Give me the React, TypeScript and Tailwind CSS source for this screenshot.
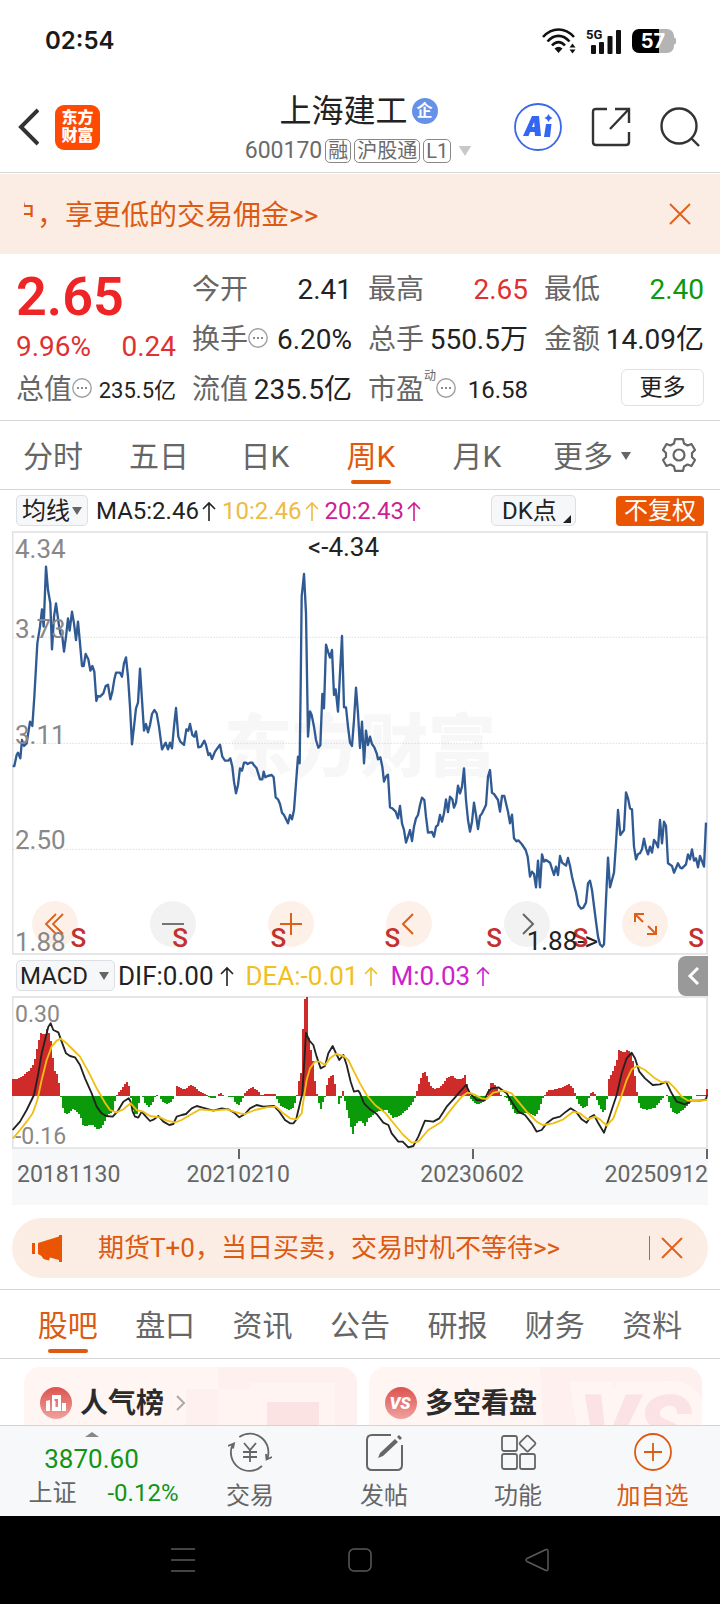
import React from 'react';

// Chart coordinates are in thirds of a pixel, one week is 6 units wide.
const WEEK = 6;
const MACD_ZERO = 438;

const PRICE_POINTS = `38,738 43,738 50,705 54,698 61,715 66,660 72,678 80,670 90,605 97,618 103,530 112,370 120,320 126,268 131,320
138,140 144,210 151,250 156,388 162,290 168,250 176,310 181,340 187,350 192,395 198,350 204,295 209,332 216,275 222,310 228,360
234,305 240,370 246,438 251,438 257,402 265,418 271,452 277,438 283,455 289,543 294,528 300,530 310,520 317,498 324,494 331,538
337,515 343,478 348,458 360,458 366,470 372,430 378,412 384,470 390,560 396,673 402,620 408,565 414,548 420,446 426,540 432,632
438,612 444,637 450,615 456,582 463,570 470,580 477,620 486,688 497,668 504,688 510,668 516,685 522,620 528,564 535,650 541,665
552,675 559,628 565,632 570,612 577,645 583,650 588,634 595,682 603,680 613,662 618,675 625,705 630,700 636,717 645,695 660,674
667,710 675,722 685,722 691,715 697,740 702,785 708,820 714,795 720,745 726,752 732,728 738,728 743,732 750,728 757,728 762,736
770,745 780,778 787,778 791,755 796,772 803,768 815,765 821,772 827,832 834,838 840,852 846,878 852,885 864,910 870,885 876,898
882,870 888,790 894,710 899,730 902,500 905,230 912,162 918,280 924,650 930,574 935,585 942,620 948,660 955,683 961,676 967,522
972,565 978,374 984,395 990,413 996,390 1002,525 1007,508 1014,575 1020,460 1026,348 1032,562 1038,562 1044,620 1050,668 1056,678
1062,600 1068,503 1074,580 1080,684 1086,605 1092,730 1098,632 1104,675 1110,650 1116,672 1123,682 1130,700 1134,718 1141,712
1147,740 1152,785 1158,770 1164,764 1170,862 1177,865 1187,875 1194,895 1200,858 1206,910 1212,930 1218,968 1224,950 1230,930
1236,963 1242,920 1248,895 1254,885 1260,855 1266,833 1273,840 1278,890 1284,938 1296,936 1302,950 1308,920 1314,915 1320,885
1326,905 1332,880 1338,838 1344,876 1350,830 1357,838 1362,863 1368,848 1374,797 1380,820 1386,800 1392,745 1398,840 1404,900
1410,935 1416,905 1422,848 1428,885 1434,927 1440,888 1446,880 1458,855 1464,770 1470,750 1476,818 1482,822 1494,840 1500,875
1506,828 1513,828 1518,850 1524,875 1530,910 1536,884 1542,955 1549,964 1555,961 1565,972 1577,990 1583,1010 1590,1070 1596,1055
1602,1062 1608,1102 1614,1022 1620,1102 1626,1003 1632,1025 1638,1020 1650,1028 1662,1065 1668,1040 1674,1065 1680,1008 1686,1028
1698,1037 1704,1014 1710,1038 1716,1070 1722,1095 1728,1118 1735,1155 1743,1166 1750,1163 1758,1148 1764,1090 1770,1082 1776,1110
1782,1158 1788,1205 1794,1250 1800,1273 1807,1280 1812,1273 1818,1140 1824,1013 1830,1102 1836,1080 1842,1058 1848,970 1854,870
1861,945 1872,930 1878,817 1884,835 1890,865 1896,868 1902,980 1908,1018 1914,1002 1920,1000 1926,988 1932,956 1938,985 1944,1003
1950,980 1956,998 1962,960 1968,968 1974,982 1980,900 1986,970 1992,905 1998,918 2004,1030 2016,1038 2022,1058 2034,1030 2040,1042
2046,1045 2058,1033 2064,1003 2070,1018 2076,988 2082,1022 2088,1015 2094,1042 2100,1008 2112,1040 2118,908`;

const DIF_POINTS = `38,540 60,515 80,480 102,435 115,370 125,310 135,270 145,230 152,220 160,240 175,247 185,275 198,310 210,318 225,322
240,345 255,385 275,430 290,470 305,490 318,498 338,500 352,485 370,455 386,445 392,455 398,485 405,500 415,503 425,485 438,500
450,513 462,508 475,498 490,515 508,525 520,522 530,500 545,495 558,492 575,475 590,468 605,472 640,482 665,475 685,478 705,490
718,502 735,492 750,475 770,465 790,470 822,468 838,485 855,510 870,520 880,520 888,510 900,460 907,430 912,350 918,248 928,272
940,285 950,320 962,355 975,348 985,310 998,288 1008,310 1018,330 1030,315 1040,345 1052,395 1062,425 1075,422 1080,430 1092,460
1110,478 1130,492 1150,518 1165,525 1175,550 1195,575 1208,575 1225,592 1240,588 1255,560 1275,512 1300,515 1318,505 1340,470
1360,448 1380,425 1398,405 1410,430 1430,450 1452,452 1465,425 1475,415 1495,412 1520,430 1535,455 1555,485 1575,495 1595,520
1610,545 1625,540 1640,520 1660,505 1680,500 1698,485 1712,475 1728,485 1745,508 1760,518 1770,502 1782,495 1795,520 1812,548
1822,520 1835,480 1850,435 1865,370 1880,325 1895,308 1905,325 1918,365 1935,385 1958,405 1980,403 1998,395 2015,430 2030,455
2055,463 2075,452 2100,452 2118,448 2121,436`;

const DEA_POINTS = `38,566 60,540 80,515 98,490 112,450 125,390 140,330 155,290 170,272 182,266 200,280 220,300 240,320 265,365 290,415
315,458 330,480 348,487 370,478 392,460 410,480 430,485 450,498 480,502 500,512 525,517 545,510 570,495 600,478 640,482 680,478
720,490 735,492 765,480 800,472 828,470 850,490 870,505 890,508 905,490 912,440 920,390 930,355 945,335 960,335 975,345 990,325
1008,312 1030,318 1045,330 1062,365 1080,400 1100,435 1125,465 1155,488 1185,525 1210,555 1235,578 1255,575 1285,540 1325,515
1360,470 1385,440 1402,428 1420,432 1445,445 1460,447 1480,428 1510,422 1535,430 1555,455 1580,485 1610,515 1628,525 1660,520
1690,508 1720,485 1740,490 1762,508 1785,500 1800,508 1820,527 1840,505 1860,450 1880,390 1895,358 1912,348 1935,360 1965,385
1985,397 2005,395 2025,415 2045,440 2065,452 2080,453 2121,450`;

// [x, signed bar height] anchors, bars between them are interpolated
const HISTOGRAM: [number, number][] = [
  [36, 50], [50, 50], [70, 62], [90, 78], [102, 98], [108, 125], [114, 158], [120, 178], [126, 198], [132, 175], [140, 202],
  [146, 192], [154, 160], [160, 105], [166, 68], [174, 65], [178, 30], [181, 0], [186, -5], [190, -45], [198, -55], [208, -50],
  [220, -38], [230, -48], [240, -55], [248, -85], [258, -92], [270, -85], [280, -88], [292, -100], [304, -95], [315, -75],
  [325, -55], [340, -45], [346, -10], [350, 0], [358, 12], [370, 28], [380, 44], [388, 28], [392, 0], [396, -30], [402, -55],
  [412, -55], [418, -15], [422, 0], [428, 0], [432, -18], [446, -33], [458, -22], [464, -5], [470, 3], [480, -2], [486, -18],
  [500, -24], [515, -18], [522, -4], [526, 0], [530, 32], [545, 22], [560, 22], [572, 35], [590, 22], [600, 12], [620, 4],
  [630, -5], [642, -8], [655, 3], [663, 10], [672, 0], [700, -3], [706, -20], [716, -28], [726, -15], [732, 5], [745, 20],
  [760, 26], [775, 15], [782, 4], [825, 6], [832, -12], [845, -32], [865, -42], [880, -35], [888, -12], [893, 15], [900, 65],
  [906, 75], [909, 200], [914, 290], [921, 296], [924, 200], [930, 150], [938, 115], [943, 60], [950, 10], [954, -10],
  [962, -42], [970, -16], [976, 0], [982, 40], [990, 60], [1000, 62], [1006, 30], [1011, 0], [1018, -28], [1024, 0], [1029, 14],
  [1034, -10], [1042, -45], [1050, -80], [1058, -118], [1066, -85], [1080, -72], [1090, -82], [1096, -90], [1104, -70],
  [1120, -55], [1140, -45], [1160, -42], [1180, -66], [1200, -58], [1220, -42], [1235, -25], [1245, -5], [1250, 10], [1260, 45],
  [1270, 70], [1276, 74], [1284, 50], [1292, 32], [1302, 20], [1320, 25], [1340, 52], [1355, 62], [1370, 52], [1385, 50],
  [1396, 65], [1402, 30], [1408, 5], [1412, -8], [1425, -22], [1438, -25], [1455, -15], [1464, 3], [1470, 40], [1480, 38],
  [1495, 20], [1502, 2], [1520, -4], [1535, -30], [1545, -52], [1560, -55], [1580, -50], [1595, -55], [1608, -60], [1620, -35],
  [1630, -3], [1636, 3], [1645, 18], [1670, 20], [1690, 28], [1708, 35], [1720, 22], [1728, 0], [1735, -22], [1750, -36],
  [1762, -28], [1770, 5], [1778, 14], [1786, 5], [1794, -22], [1808, -50], [1817, -40], [1822, 0], [1826, 50], [1836, 70],
  [1850, 100], [1856, 140], [1870, 130], [1882, 138], [1892, 130], [1900, 100], [1908, 35], [1914, -10], [1920, -35],
  [1940, -42], [1965, -35], [1985, -10], [1995, 0], [2000, 5], [2006, -15], [2016, -45], [2030, -54], [2050, -42], [2070, -20],
  [2076, 0], [2090, 2], [2114, 2], [2118, 10], [2124, 30],
];

function getBars() {
  const bars: { x: number; value: number }[] = [];
  let anchor = 0;

  for (let x = 36; x < 2121; x += WEEK) {
    const center = x + WEEK / 2;
    while (anchor < HISTOGRAM.length - 2 && HISTOGRAM[anchor + 1][0] < center) {
      anchor += 1;
    }
    const [x0, v0] = HISTOGRAM[anchor];
    const [x1, v1] = HISTOGRAM[anchor + 1];
    bars.push({ x, value: Math.round(v0 + ((v1 - v0) * (center - x0)) / (x1 - x0)) });
  }

  return bars;
}

const BARS = getBars();

const SELL_MARKS = [235, 540, 835, 1177, 1482, 1741, 2088];

const PERIOD_TABS = ['分时', '五日', '日K', '周K', '月K'];
const INFO_TABS = ['股吧', '盘口', '资讯', '公告', '研报', '财务', '资料'];

function CloseIcon() {
  return (
    <svg viewBox="0 0 24 24" className="h-6 w-6" fill="none" stroke="#e2621b" strokeWidth="2">
      <path d="M2 2 22 22M22 2 2 22" />
    </svg>
  );
}

function InfoIcon() {
  return (
    <svg viewBox="0 0 20 20" className="mb-1 h-5 w-5 shrink-0" fill="none" stroke="#a0a0a0" strokeWidth="1.4">
      <circle cx="10" cy="10" r="9.2" />
      <path d="M5 10h2M9 10h2M13 10h2" stroke="#8a8a8a" strokeWidth="2" />
    </svg>
  );
}

function UpArrow() {
  return (
    <svg viewBox="0 0 14 20" className="h-5 w-3.5 shrink-0" fill="none" stroke="currentColor" strokeWidth="1.6">
      <path d="M7 20V2M1 8 7 2l6 6" />
    </svg>
  );
}

function Caret({ className }: { className: string }) {
  return (
    <svg viewBox="0 0 10 8" className={className} fill="currentColor">
      <path d="M0 0h10L5 8z" />
    </svg>
  );
}

function StatusBar() {
  return (
    <div className="flex h-[82px] shrink-0 items-center justify-between pl-[45px] pr-11 text-[#1a1a1a]">
      <span className="text-2xl font-semibold font-[Inter,sans-serif]">02:54</span>
      <div className="flex items-center gap-2.5">
        <svg viewBox="0 0 34 26" className="h-[26px] w-[34px]" fill="none" stroke="#111" strokeWidth="2.6">
          <path d="M1 9C10-1 23-1 32 9" />
          <path d="M5.500 13.500C12 6 21 6 27.500 13.500" />
          <path d="M10 17.500C14 13 19 13 23 17.500" />
          <path d="M12.500 20.500Q16.500 17 20.500 20.500L16.500 25z" fill="#111" stroke="none" />
          <path d="M30.500 15.500l3 4h-6zM30.500 25.500l3-4h-6z" fill="#111" stroke="none" />
        </svg>
        <svg viewBox="0 0 36 26" className="h-[26px] w-9" fill="#111">
          <text x="0" y="10.500" fontSize="13" fontWeight="700" fontFamily="Roboto, sans-serif">5G</text>
          <rect x="5" y="17" width="5" height="9" rx="1" />
          <rect x="13" y="14" width="5" height="12" rx="1" />
          <rect x="21.500" y="8" width="5" height="18" rx="1" />
          <rect x="30" y="2" width="5" height="24" rx="1" />
        </svg>
        <svg viewBox="0 0 44 24" className="h-6 w-11">
          <path d="M27 0h8a7 7 0 0 1 7 7v1.500q2 0 2 2v3q0 2-2 2V17a7 7 0 0 1-7 7h-8z" fill="#b4b4b4" />
          <path d="M7 0h20v24H7a7 7 0 0 1-7-7V7a7 7 0 0 1 7-7z" fill="#000" />
          <text x="21" y="19" fontSize="20" fontWeight="700" fill="#fff" textAnchor="middle" fontFamily="Inter, sans-serif">57</text>
        </svg>
      </div>
    </div>
  );
}

function Header() {
  return (
    <header className="grid h-[91px] shrink-0 grid-cols-[1fr_auto_1fr] items-center border-b border-[#d4d7da] pl-[17px] pr-5">
      <div className="flex items-center gap-4">
        <button aria-label="返回">
          <svg viewBox="0 0 22 38" className="h-[38px] w-[22px]" fill="none" stroke="#333" strokeWidth="4">
            <path d="M21 2 4 19l17 17" />
          </svg>
        </button>
        <a href="#home" className="grid h-[45px] w-[45px] place-content-center rounded-[9px] bg-[#fe4a02] text-center text-base font-black leading-[18px] text-white">
          <span>东方</span>
          <span>财富</span>
        </a>
      </div>

      <div className="flex flex-col items-center gap-1 pt-1">
        <div className="flex items-center gap-1">
          <h1 className="text-[32px] leading-10 text-[#222]">上海建工</h1>
          <span className="grid h-[26px] w-[26px] place-content-center rounded-full bg-[#6592e8] text-base font-bold leading-none text-white">企</span>
        </div>
        <div className="flex items-center gap-[3px] text-xl leading-[22px] text-[#6b6b6b]">
          <span className="text-[23px] leading-8">600170</span>
          <span className="rounded-[5px] border border-[#888] px-0.5">融</span>
          <span className="rounded-[5px] border border-[#888] px-0.5">沪股通</span>
          <span className="rounded-[5px] border border-[#888] px-0.5">L1</span>
          <Caret className="ml-1 h-2.5 w-3.5 text-[#c8c8c8]" />
        </div>
      </div>

      <div className="flex items-center justify-end gap-[29px]">
        <button aria-label="AI">
          <svg viewBox="0 0 48 48" className="h-12 w-12" fill="#3366f5">
            <circle cx="24" cy="24" r="23" fill="none" stroke="#3a68e8" strokeWidth="1.800" />
            <path fillRule="evenodd" d="M18 13h7l2 20h-6l-.4-4h-4.500l-1.600 4H9zM18 24h2.500l-.3-5z" />
            <path d="M32 21h5.500L36 34h-6z" />
            <path d="m34.500 11 1.500 2.500 2.500 1.500-2.500 1.500-1.500 2.500-1.500-2.500-2.500-1.500 2.500-1.500z" />
          </svg>
        </button>
        <button aria-label="分享">
          <svg viewBox="0 0 40 40" className="h-10 w-10" fill="none" stroke="#333" strokeWidth="2.400">
            <path d="M16 2H5q-3 0-3 3v30q0 3 3 3h30q3 0 3-3V25M24 2h14v14M38 2 19 22" />
          </svg>
        </button>
        <button aria-label="搜索">
          <svg viewBox="0 0 40 40" className="h-10 w-10" fill="none" stroke="#333" strokeWidth="2.400">
            <circle cx="19" cy="19" r="17.500" />
            <path d="m31 31 8 8" />
          </svg>
        </button>
      </div>
    </header>
  );
}

function Banner() {
  return (
    <div className="mt-px flex h-20 shrink-0 items-center bg-[#fcede4] pl-6 pr-7 text-[28px] text-[#dd5a12]">
      <a href="#account" className="flex-1 overflow-hidden whitespace-nowrap pt-1">
        <span className="-ml-[15px]">户，享更低的交易佣金&gt;&gt;</span>
      </a>
      <button aria-label="关闭">
        <CloseIcon />
      </button>
    </div>
  );
}

interface QuoteItemProps {
  label: string;
  value: string;
  valueClass?: string;
  info?: boolean;
  sup?: string;
}

function QuoteItem({ label, value, valueClass = 'text-[28px] text-[#222]', info, sup }: QuoteItemProps) {
  return (
    <div className="flex h-[50px] items-center justify-between whitespace-nowrap">
      <span className="flex items-center text-[28px] text-[#666]">
        {label}
        {sup ? <sup className="mb-4 text-xs leading-none">{sup}</sup> : null}
        {info ? <InfoIcon /> : null}
      </span>
      <span className={valueClass}>{value}</span>
    </div>
  );
}

function Quote() {
  return (
    <section className="grid h-[167px] shrink-0 grid-cols-4 gap-x-4 border-b border-[#d4d7da] px-4 pt-[11px]">
      <div>
        <div className="flex h-[64px] items-center text-[54px] font-semibold leading-none text-[#ee2527]">2.65</div>
        <div className="flex h-9 items-center justify-between text-[28px] text-[#e03030]">
          <span>9.96%</span>
          <span>0.24</span>
        </div>
        <QuoteItem label="总值" value="235.5亿" info valueClass="text-[22px] text-[#222]" />
      </div>
      <div>
        <QuoteItem label="今开" value="2.41" />
        <QuoteItem label="换手" value="6.20%" info />
        <QuoteItem label="流值" value="235.5亿" />
      </div>
      <div>
        <QuoteItem label="最高" value="2.65" valueClass="text-[28px] text-[#e03030]" />
        <QuoteItem label="总手" value="550.5万" />
        <QuoteItem label="市盈" value="16.58" info sup="动" valueClass="text-2xl text-[#222]" />
      </div>
      <div>
        <QuoteItem label="最低" value="2.40" valueClass="text-[28px] text-[#0c990c]" />
        <QuoteItem label="金额" value="14.09亿" />
        <div className="flex h-[50px] items-center justify-end pb-1.5">
          <button className="h-[37px] w-[83px] rounded-md border border-[#dfe1e4] text-[23px] leading-none text-[#222]">更多</button>
        </div>
      </div>
    </section>
  );
}

function PeriodTabs() {
  return (
    <nav className="grid h-[69px] shrink-0 grid-cols-[106fr_106fr_106fr_106fr_106fr_124fr_66fr] border-b border-[#d4d7da] text-[30px] text-[#666]">
      {PERIOD_TABS.map((tab) => {
        const active = tab === '周K';

        return (
          <button key={tab} className={`relative pt-0.5 ${active ? 'text-[#e2580a]' : ''}`}>
            {tab}
            {active ? <span className="absolute bottom-[5px] left-1/2 h-1 w-10 -translate-x-1/2 rounded-full bg-[#e2580a]" /> : null}
          </button>
        );
      })}
      <button className="flex items-center justify-center gap-2 pt-0.5">
        更多
        <Caret className="h-2 w-2.5" />
      </button>
      <button aria-label="设置" className="grid place-content-center pr-4">
        <svg viewBox="0 0 34 34" className="h-[34px] w-[34px]" fill="none" stroke="#666" strokeWidth="2.200" strokeLinejoin="round">
          <path d="M13 1.200h8l1 4.300 3.500 2 4-1.500 3.500 6-3 3v4l3 3-3.500 6-4-1.500-3.500 2-1 4.300h-8l-1-4.300-3.500-2-4 1.500-3.500-6 3-3v-4l-3-3 3.500-6 4 1.500 3.500-2z" />
          <circle cx="17" cy="17" r="5.500" />
        </svg>
      </button>
    </nav>
  );
}

function PriceChart() {
  return (
    <div className="relative">
      <svg viewBox="36 33 2088 1272" className="block w-full">
        <text x="1080" y="752" fontSize="204" fontWeight="900" fill="#f7f7f7" textAnchor="middle" fontFamily="Noto Sans CJK SC, sans-serif">
          东方财富
        </text>
        <rect x="38" y="36" width="2083" height="1266" fill="none" stroke="#e2e2e4" strokeWidth="5" />
        {[352, 670, 988].map((y) => (
          <path key={y} d={`M38 ${y}H2121`} stroke="#ccc" strokeWidth="3" strokeDasharray="3 6" />
        ))}
        <polyline points={PRICE_POINTS} fill="none" stroke="#2f5a93" strokeWidth="7" strokeLinejoin="round" />
      </svg>

      <div className="absolute bottom-2 left-5 right-10 flex justify-between text-[#dd5f18]">
        <button aria-label="快退" className="h-[46px] w-[46px] rounded-full bg-[#fdece3]/80">
          <svg viewBox="0 0 46 46" fill="none" stroke="currentColor" strokeWidth="1.800">
            <path d="M24 13 14 23l10 10M31 13 21 23l10 10" />
          </svg>
        </button>
        <button aria-label="缩小" className="h-[46px] w-[46px] rounded-full bg-[#f1f1f1]/90">
          <svg viewBox="0 0 46 46" fill="none" stroke="#666" strokeWidth="1.800">
            <path d="M12 23h22" />
          </svg>
        </button>
        <button aria-label="放大" className="h-[46px] w-[46px] rounded-full bg-[#fdece3]/80">
          <svg viewBox="0 0 46 46" fill="none" stroke="currentColor" strokeWidth="2">
            <path d="M12 23h22M23 12v22" />
          </svg>
        </button>
        <button aria-label="左移" className="h-[46px] w-[46px] rounded-full bg-[#fdece3]/80">
          <svg viewBox="0 0 46 46" fill="none" stroke="currentColor" strokeWidth="2">
            <path d="M27 13 17 23l10 10" />
          </svg>
        </button>
        <button aria-label="右移" className="h-[46px] w-[46px] rounded-full bg-[#f1f1f1]/90">
          <svg viewBox="0 0 46 46" fill="none" stroke="#666" strokeWidth="2">
            <path d="m19 13 10 10-10 10" />
          </svg>
        </button>
        <button aria-label="全屏" className="h-[46px] w-[46px] rounded-full bg-[#fdece3]/80">
          <svg viewBox="0 0 46 46" fill="none" stroke="currentColor" strokeWidth="2">
            <path d="M13 21v-8h9M13 13l8 8M34 25v8h-9M34 33l-8-8" />
          </svg>
        </button>
      </div>

      <svg viewBox="36 33 2088 1272" className="pointer-events-none absolute inset-0 w-full" fontFamily="Roboto, sans-serif" fontSize="78">
        {SELL_MARKS.map((x) => (
          <text key={x} x={x} y="1280" fill="#c4302f" fontWeight="500" textAnchor="middle">S</text>
        ))}
        <g fill="#888">
          <text x="45" y="114">4.34</text>
          <text x="45" y="354">3.73</text>
          <text x="45" y="672">3.11</text>
          <text x="45" y="987">2.50</text>
          <text x="45" y="1294">1.88</text>
        </g>
        <g fill="#222">
          <text x="924" y="108">&lt;-4.34</text>
          <text x="1580" y="1290">1.88-&gt;</text>
        </g>
      </svg>
    </div>
  );
}

function MacdChart() {
  return (
    <svg viewBox="36 138 2088 459" className="block w-full" fontFamily="Roboto, sans-serif" fontSize="69">
      <rect x="38" y="141" width="2083" height="453" fill="none" stroke="#e2e2e4" strokeWidth="5" />
      {BARS.map(({ x, value }) => (
        <rect
          key={x}
          x={x}
          y={value > 0 ? MACD_ZERO - value : MACD_ZERO}
          width={WEEK}
          height={Math.abs(value)}
          fill={value > 0 ? '#cf2b2b' : '#0a9a0a'}
          shapeRendering="crispEdges"
        />
      ))}
      <g fill="#888">
        <text x="45" y="216">0.30</text>
        <text x="45" y="582">-0.16</text>
      </g>
      <polyline points={DIF_POINTS} fill="none" stroke="#222" strokeWidth="5.500" strokeLinejoin="round" />
      <polyline points={DEA_POINTS} fill="none" stroke="#f0c010" strokeWidth="5.500" strokeLinejoin="round" />
    </svg>
  );
}

function ChartPanel() {
  return (
    <section className="shrink-0 px-3">
      <div className="flex h-[41px] items-center px-1 text-2xl leading-none">
        <button className="flex h-[31px] items-center gap-0.5 rounded-[5px] border border-[#dcdfe3] bg-[#f6f7f9] px-[5px] text-[#222]">
          均线
          <Caret className="h-2 w-2.5 text-[#666]" />
        </button>
        <span className="ml-2 flex items-center gap-[3px] text-[#222]">MA5:2.46 <UpArrow /></span>
        <span className="ml-1.5 flex items-center gap-[3px] text-[#eebb44]">10:2.46 <UpArrow /></span>
        <span className="ml-1.5 flex items-center gap-[3px] text-[#cc1f95]">20:2.43 <UpArrow /></span>
        <button className="ml-auto flex h-[31px] w-[85px] items-center rounded-[5px] border border-[#dcdfe3] bg-[#f6f7f9] pl-2.5 text-[#222]">
          DK点
          <svg viewBox="0 0 8 8" className="ml-auto mr-1 mt-4 h-2 w-2" fill="#222">
            <path d="M8 0v8H0z" />
          </svg>
        </button>
        <button className="ml-10 h-[30px] w-[88px] rounded bg-[#ea5504] text-white">不复权</button>
      </div>

      <PriceChart />

      <div className="flex h-[41px] items-center pl-1 text-[26px] leading-none">
        <button className="flex h-[31px] w-[99px] shrink-0 items-center justify-between rounded-[5px] border border-[#dcdfe3] bg-[#f6f7f9] pl-[3px] pr-[5px] text-2xl leading-none text-[#222]">
          MACD
          <Caret className="h-2 w-2.5 text-[#666]" />
        </button>
        <span className="ml-[3px] flex items-center gap-1.5 text-[#222]">DIF:0.00 <UpArrow /></span>
        <span className="ml-3 flex items-center gap-1.5 text-[#f0c020]">DEA:-0.01 <UpArrow /></span>
        <span className="ml-3 flex items-center gap-1.5 text-[#cc22cc]">M:0.03 <UpArrow /></span>
        <button aria-label="展开" className="ml-auto grid h-10 w-[30px] place-content-center rounded-l-lg bg-[#999]">
          <svg viewBox="0 0 12 20" className="h-5 w-3" fill="none" stroke="#fff" strokeWidth="3">
            <path d="m11 2-8 8 8 8" />
          </svg>
        </button>
      </div>

      <MacdChart />

      <div className="relative h-14 bg-[#f7f8fa] text-[23px] leading-none text-[#666]">
        <span className="absolute left-[5px] top-3.5">20181130</span>
        <span className="absolute left-[32.5%] top-0 h-2.5 w-0.5 bg-[#666]" />
        <span className="absolute left-[32.5%] top-3.5 -translate-x-1/2">20210210</span>
        <span className="absolute left-[66.1%] top-0 h-2.5 w-0.5 bg-[#666]" />
        <span className="absolute left-[66.1%] top-3.5 -translate-x-1/2">20230602</span>
        <span className="absolute right-0 top-0 h-2.5 w-0.5 bg-[#666]" />
        <span className="absolute right-0 top-3.5">20250912</span>
      </div>
    </section>
  );
}

function Notice() {
  return (
    <div className="mx-3 mt-[13px] flex h-[60px] shrink-0 items-center rounded-full bg-[#fcede4] pl-5 pr-6 text-[26px] text-[#dd5a12]">
      <svg viewBox="0 0 30 27" className="h-[27px] w-[30px]" fill="#ea5504">
        <path d="M0 8h3v11H0zM6 8l21-6.500V0h3v27h-3v-2l-9-2.500-1 3-4-1-2-1-1.500-2.500L6 19z" />
      </svg>
      <a href="#futures" className="ml-9 whitespace-nowrap">期货T+0，当日买卖，交易时机不等待&gt;&gt;</a>
      <span className="ml-auto mr-2.5 h-6 w-px bg-[#dd5a12]" />
      <button aria-label="关闭公告">
        <CloseIcon />
      </button>
    </div>
  );
}

function InfoTabs() {
  return (
    <nav className="mt-[11px] flex h-[70px] shrink-0 border-y border-[#d4d7da] px-[19px] text-[30px] text-[#666]">
      {INFO_TABS.map((tab, index) => (
        <button key={tab} className={`relative flex-1 pt-0.5 ${index === 0 ? 'text-[#dd5a12]' : ''}`}>
          {tab}
          {index === 0 ? <span className="absolute bottom-[5px] left-1/2 h-1 w-10 -translate-x-1/2 rounded-full bg-[#dd5a12]" /> : null}
        </button>
      ))}
    </nav>
  );
}

function Cards() {
  return (
    <section className="grid grid-cols-2 gap-3 pb-3 pl-6 pr-[18px] pt-2 text-[28px] font-bold text-[#2b2b2b]">
      <a href="#rank" className="relative flex h-40 items-start gap-2 overflow-hidden rounded-2xl bg-[#fff5f3] px-4 pt-4">
        <svg viewBox="0 0 333 160" className="absolute inset-0 h-full w-full">
          <path d="M194 0h139v160H162V22h32z" fill="#fef0ee" />
          <path d="M194 54V22h32v-6h85v144H194z" fill="#fff4f2" />
          <rect x="243" y="35" width="52" height="125" fill="#fce3e3" />
        </svg>
        <svg viewBox="0 0 32 32" className="relative mt-1 h-8 w-8">
          <defs>
            <linearGradient id="rank-icon" x1="0" y1="0" x2="0" y2="1">
              <stop offset="0" stopColor="#dc5350" />
              <stop offset="1" stopColor="#f0a19d" />
            </linearGradient>
          </defs>
          <circle cx="16" cy="16" r="16" fill="url(#rank-icon)" />
          <path fill="#fff" fillRule="evenodd" d="M6 14l4-1v11H6zM12 8h9v16h-9zM14.500 12v2h1v6h2.500v-8zM22 16h4v8h-4z" />
        </svg>
        <span className="relative leading-[42px]">人气榜</span>
        <svg viewBox="0 0 10 16" className="relative ml-1 mt-3 h-4 w-2.5" fill="none" stroke="#aaa" strokeWidth="2">
          <path d="m1 1 7 7-7 7" />
        </svg>
      </a>
      <a href="#versus" className="relative flex h-40 items-start gap-2 overflow-hidden rounded-2xl bg-[#fff5f3] px-4 pt-4">
        <svg viewBox="0 0 333 160" className="absolute inset-0 h-full w-full">
          <path d="M171 0h162v160H180z" fill="#fef0ee" />
          <text
            x="210"
            y="92"
            fontSize="90"
            fontWeight="900"
            fontStyle="italic"
            fill="#fce3e3"
            stroke="#fff6f4"
            strokeWidth="26"
            paintOrder="stroke"
            fontFamily="Roboto, sans-serif"
          >
            VS
          </text>
        </svg>
        <svg viewBox="0 0 32 32" className="relative mt-1 h-8 w-8">
          <circle cx="16" cy="16" r="16" fill="url(#rank-icon)" />
          <text x="15" y="22" fontSize="17" fontWeight="900" fontStyle="italic" fill="#fff" textAnchor="middle" fontFamily="Roboto, sans-serif">VS</text>
        </svg>
        <span className="relative leading-[42px]">多空看盘</span>
      </a>
    </section>
  );
}

function BottomBar() {
  return (
    <footer className="grid h-[91px] shrink-0 grid-cols-[183fr_134fr_134fr_134fr_135fr] border-t border-[#d0d3d8] bg-[#f6f8fa] text-2xl leading-8 text-[#666]">
      <a href="#index" className="flex flex-col items-center pt-1.5 text-[#149414]">
        <svg viewBox="0 0 14 5" className="h-[5px] w-3.5" fill="#888">
          <path d="M0 5 7 0l7 5z" />
        </svg>
        <span className="mt-1 text-[26px] leading-9">3870.60</span>
        <span className="ml-6 flex w-[150px] justify-between leading-8">
          <span className="text-[#666]">上证</span>
          <span>-0.12%</span>
        </span>
      </a>
      <button className="flex flex-col items-center gap-2 pt-1.5">
        <svg viewBox="0 0 44 40" className="h-10 w-11" fill="none" stroke="#666" strokeWidth="1.800">
          <path d="M11.300 5A18.500 18.500 0 0 1 39.300 26.500M34 34A18.500 18.500 0 0 1 4.700 12.500M0 14l6-2.500-1 5M38 22l.5 5.500L44 25" />
          <path d="m16 11 6 7 6-7M22 18v12M15 20h14M15 25h14" />
        </svg>
        交易
      </button>
      <button className="flex flex-col items-center gap-2 pt-1.5">
        <svg viewBox="0 0 40 40" className="h-10 w-10" fill="none" stroke="#666" strokeWidth="2">
          <path d="M27 3H8q-5 0-5 5v25q0 5 5 5h25q5 0 5-5V13" />
          <path d="m14 26 2-5L31 7l3 3-15 14zM33 5l2-2 3 3-2 2z" fill="#666" stroke="none" />
        </svg>
        发帖
      </button>
      <button className="flex flex-col items-center gap-2 pt-1.5">
        <svg viewBox="0 0 40 40" className="h-10 w-10" fill="none" stroke="#666" strokeWidth="1.800" strokeLinejoin="round">
          <rect x="4" y="4" width="15" height="15" rx="2" />
          <rect x="4" y="22" width="15" height="15" rx="2" />
          <rect x="22" y="22" width="15" height="15" rx="2" />
          <rect x="23.500" y="5.500" width="12" height="12" rx="1.500" transform="rotate(45 29.500 11.500)" />
        </svg>
        功能
      </button>
      <button className="flex flex-col items-center gap-2 pt-1.5 text-[#dd5a12]">
        <svg viewBox="0 0 40 40" className="h-10 w-10" fill="none" stroke="currentColor" strokeWidth="1.800">
          <circle cx="20" cy="20" r="18" />
          <path d="M11 20h18M20 11v18" />
        </svg>
        加自选
      </button>
    </footer>
  );
}

function SystemNav() {
  return (
    <div className="flex h-[88px] shrink-0 items-center justify-center gap-[153px] bg-black">
      <button aria-label="最近任务">
        <svg viewBox="0 0 24 24" className="h-6 w-6" fill="none" stroke="#5a5a5a" strokeWidth="1.500">
          <path d="M0 1h24M0 12h24M0 23h24" />
        </svg>
      </button>
      <button aria-label="主屏幕">
        <svg viewBox="0 0 24 24" className="h-6 w-6" fill="none" stroke="#5a5a5a" strokeWidth="1.500">
          <rect x="1" y="1" width="22" height="22" rx="5" />
        </svg>
      </button>
      <button aria-label="后退">
        <svg viewBox="0 0 24 24" className="h-6 w-6" fill="none" stroke="#5a5a5a" strokeWidth="1.500" strokeLinejoin="round">
          <path d="M21 1.500 2 10.500q-2 1.500 0 3l19 9q2 .5 2-2v-17q0-2.500-2-2z" />
        </svg>
      </button>
    </div>
  );
}

export default function App() {
  return (
    <div className="flex h-screen flex-col overflow-hidden bg-white font-[Roboto,'Noto_Sans_CJK_SC',sans-serif]">
      <StatusBar />
      <Header />
      <main className="flex min-h-0 flex-1 flex-col overflow-hidden">
        <Banner />
        <Quote />
        <PeriodTabs />
        <ChartPanel />
        <Notice />
        <InfoTabs />
        <Cards />
      </main>
      <BottomBar />
      <SystemNav />
    </div>
  );
}
